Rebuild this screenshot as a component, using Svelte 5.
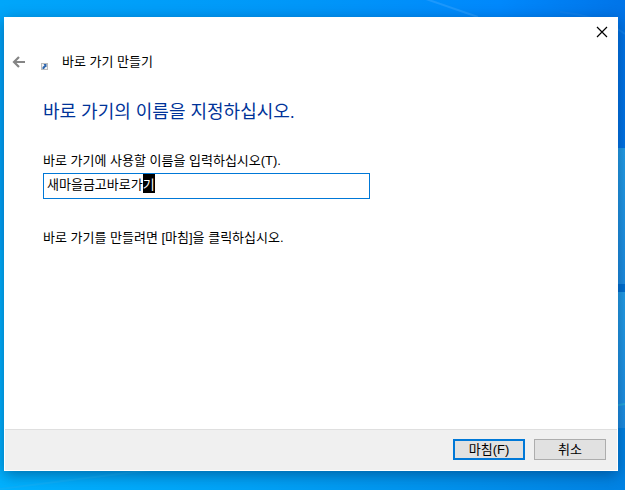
<script lang="ts">
  import { onMount } from 'svelte'

  let name = $state('새마을금고바로가기')
  let nameInput: HTMLInputElement

  onMount(() => {
    nameInput.focus()
    nameInput.setSelectionRange(name.length - 1, name.length)
  })
</script>

<div class="desktop">
  <svg class="wallpaper" viewBox="0 0 625 490" preserveAspectRatio="none" aria-hidden="true">
    <defs>
      <linearGradient id="sky" x1="0" y1="0" x2="1" y2="0">
        <stop offset="0" stop-color="#00a6fa" />
        <stop offset="0.5" stop-color="#0096f8" />
        <stop offset="0.8" stop-color="#0088fc" />
        <stop offset="1" stop-color="#0074e8" />
      </linearGradient>
      <linearGradient id="ground" x1="0" y1="0" x2="1" y2="0">
        <stop offset="0" stop-color="#00b2ff" />
        <stop offset="0.4" stop-color="#00a2f6" />
        <stop offset="1" stop-color="#0083e4" />
      </linearGradient>
      <linearGradient id="pane" x1="0" y1="0" x2="0" y2="1">
        <stop offset="0" stop-color="#24a0ea" />
        <stop offset="1" stop-color="#1d8fe4" />
      </linearGradient>
    </defs>
    <rect width="625" height="250" fill="url(#sky)" />
    <rect y="250" width="625" height="240" fill="url(#ground)" />
    <path d="M426 -1 L478 17" stroke="#1c98fc" stroke-width="2" />
    <path d="M560 12 Q600 16 625 34" stroke="#0c80ee" stroke-width="2" fill="none" />
    <rect x="600" y="148" width="25" height="136" fill="url(#pane)" />
    <rect x="600" y="284" width="25" height="8" fill="#0072d4" />
    <rect x="600" y="292" width="25" height="136" fill="url(#pane)" />
    <path d="M600 408 L625 404" stroke="#27acdf" stroke-width="2" />
    <path d="M0 489 L150 470" stroke="#0cb0fa" stroke-width="2" />
  </svg>

  <main class="dialog">
    <div class="titlebar">
      <button class="icon-btn" aria-label="닫기">
        <svg width="12" height="12" viewBox="0 0 12 12">
          <path d="M1 1 L11 11 M11 1 L1 11" stroke="#000" stroke-width="1.2" />
        </svg>
      </button>
    </div>

    <header class="wizard-header">
      <button class="icon-btn" aria-label="뒤로">
        <svg width="14" height="12" viewBox="0 0 14 12">
          <path d="M13 6 H2 M7 1 L2 6 L7 11" fill="none" stroke="#858585" stroke-width="2.2" />
        </svg>
      </button>
      <svg class="shortcut-icon" width="7" height="7" viewBox="0 0 7 7" aria-hidden="true">
        <rect x="0.5" y="0.5" width="6" height="6" fill="#f4f4f4" stroke="#bcbcbc" />
        <path d="M2.5 1 H5.5 V4 H4.5 L3 6 H1.5 V4 L3.5 2.5 Z" fill="#2c65ad" />
      </svg>
      <span>바로 가기 만들기</span>
    </header>

    <form id="shortcut-form" class="content" onsubmit={(e) => e.preventDefault()}>
      <h1>바로 가기의 이름을 지정하십시오.</h1>
      <label for="shortcut-name">바로 가기에 사용할 이름을 입력하십시오(T).</label>
      <input
        id="shortcut-name"
        type="text"
        autocomplete="off"
        spellcheck="false"
        bind:this={nameInput}
        bind:value={name}
      />
      <p>바로 가기를 만들려면 [마침]을 클릭하십시오.</p>
    </form>

    <footer>
      <button class="btn primary" type="submit" form="shortcut-form">마침(F)</button>
      <button class="btn" type="button">취소</button>
    </footer>
  </main>
</div>

<style>
  :global(body) {
    margin: 0;
  }

  .desktop {
    position: relative;
    box-sizing: border-box;
    min-height: 100vh;
    padding: 17px 7px 19px 4px;
    display: flex;
    overflow: hidden;
    font-family: "Liberation Sans", "Noto Sans CJK KR", sans-serif;
    font-size: 13px;
    line-height: 18px;
    color: #000;
  }

  .wallpaper {
    position: absolute;
    inset: 0;
    width: 100%;
    height: 100%;
  }

  .dialog {
    position: relative;
    flex: 1;
    display: flex;
    flex-direction: column;
    box-sizing: border-box;
    border: 1px solid #fff;
    background: #fff;
    box-shadow: 0 4px 14px rgba(0, 30, 70, 0.45);
  }

  .titlebar {
    display: flex;
    justify-content: flex-end;
    padding: 8px 9px 0;
  }

  .icon-btn {
    display: flex;
    padding: 0;
    border: none;
    background: transparent;
  }

  .wizard-header {
    display: flex;
    align-items: center;
    padding: 15px 7px 0;
  }

  .shortcut-icon {
    margin: 8px 14px 0 15px;
  }

  .content {
    flex: 1;
    display: flex;
    flex-direction: column;
    align-items: flex-start;
    padding: 29px 38px 0;
  }

  h1 {
    margin: 0 0 28px;
    font-size: 18px;
    font-weight: 400;
    line-height: 24px;
    color: #003399;
  }

  label {
    margin-bottom: 3px;
  }

  input {
    box-sizing: border-box;
    width: 61%;
    height: 26px;
    padding: 0 3px 6px;
    border: 1px solid #0078d7;
    outline: none;
    background: #fff;
    font: inherit;
    color: inherit;
  }

  input::selection {
    background: #000;
    color: #fff;
  }

  p {
    margin: 30px 0 0;
  }

  footer {
    display: flex;
    justify-content: flex-end;
    gap: 9px;
    padding: 9px 11px 10px;
    border-top: 1px solid #dfdfdf;
    background: #f0f0f0;
  }

  .btn {
    box-sizing: border-box;
    width: 72px;
    height: 21px;
    padding: 0;
    border: 1px solid #adadad;
    background: #e1e1e1;
    font: inherit;
    line-height: 16px;
    color: inherit;
  }

  .btn.primary {
    border: 2px solid #0078d7;
  }
</style>
